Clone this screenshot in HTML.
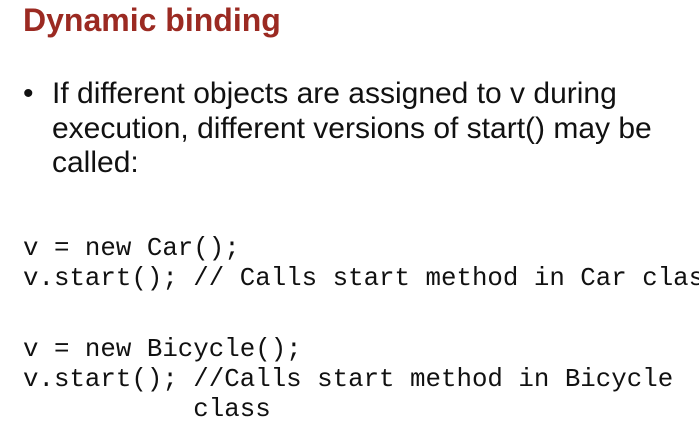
<!DOCTYPE html>
<html><head><style>
html,body{margin:0;padding:0;background:#fff;width:699px;height:431px;overflow:hidden;position:relative}
.t{position:absolute;left:23px;top:2px;font:bold 32px "Liberation Sans",sans-serif;color:#9b2a22;white-space:nowrap}
.b{position:absolute;left:52px;top:77px;font:30px/34.5px "Liberation Sans",sans-serif;color:#111;width:645px}
.dot{position:absolute;left:23px;top:77px;font:30px/34.5px "Liberation Sans",sans-serif;color:#111}
.c{position:absolute;left:23px;font:25.8px/30px "Liberation Mono",monospace;color:#111;white-space:pre;margin:0}
</style></head><body>
<div class="t">Dynamic binding</div>
<div class="dot">•</div>
<div class="b">If different objects are assigned to v during<br>execution, different versions of start() may be<br>called:</div>
<pre class="c" style="top:234px">v = new Car();
v.start(); // Calls start method in Car class</pre>
<pre class="c" style="top:335px">v = new Bicycle();
v.start(); //Calls start method in Bicycle
           class</pre>
</body></html>
